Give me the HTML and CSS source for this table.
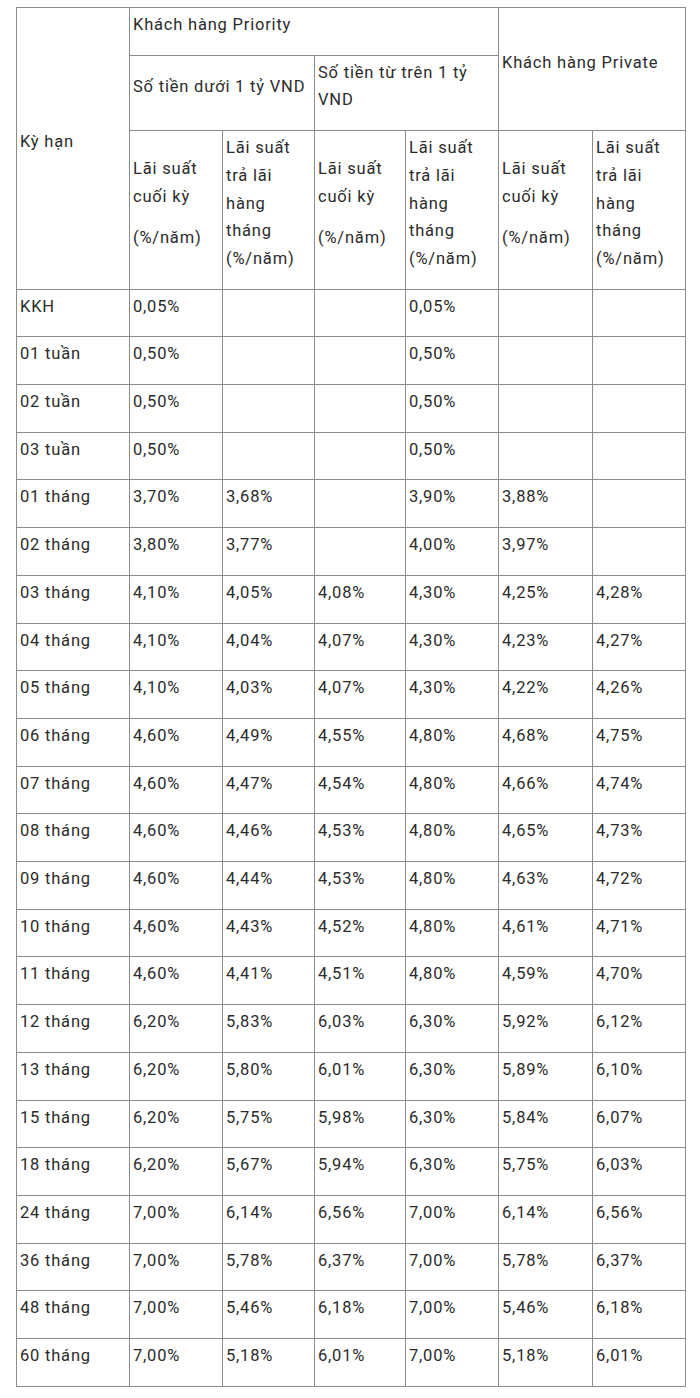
FILE: index.html
```html
<!DOCTYPE html>
<html lang="vi">
<head>
<meta charset="utf-8">
<title>Lãi suất</title>
<link rel="stylesheet" href="styles.css">
</head>
<body>
<div class="page">
<table class="rates">
<colgroup>
<col class="c1"><col class="c2"><col class="c3"><col class="c4"><col class="c5"><col class="c6"><col class="c7">
</colgroup>
<tbody>
<tr>
<td rowspan="3"><p>Kỳ hạn</p></td>
<td colspan="4"><p>Khách hàng Priority</p></td>
<td colspan="2" rowspan="2"><p>Khách hàng Private</p></td>
</tr>
<tr>
<td colspan="2"><p>Số tiền dưới 1 tỷ VND</p></td>
<td colspan="2"><p>Số tiền từ trên 1 tỷ VND</p></td>
</tr>
<tr>
<td><p>Lãi suất cuối kỳ</p><p>(%/năm)</p></td>
<td><p>Lãi suất trả lãi hàng tháng (%/năm)</p></td>
<td><p>Lãi suất cuối kỳ</p><p>(%/năm)</p></td>
<td><p>Lãi suất trả lãi hàng tháng (%/năm)</p></td>
<td><p>Lãi suất cuối kỳ</p><p>(%/năm)</p></td>
<td><p>Lãi suất trả lãi hàng tháng (%/năm)</p></td>
</tr>
<tr><td><p>KKH</p></td><td><p>0,05%</p></td><td></td><td></td><td><p>0,05%</p></td><td></td><td></td></tr>
<tr><td><p>01 tuần</p></td><td><p>0,50%</p></td><td></td><td></td><td><p>0,50%</p></td><td></td><td></td></tr>
<tr><td><p>02 tuần</p></td><td><p>0,50%</p></td><td></td><td></td><td><p>0,50%</p></td><td></td><td></td></tr>
<tr><td><p>03 tuần</p></td><td><p>0,50%</p></td><td></td><td></td><td><p>0,50%</p></td><td></td><td></td></tr>
<tr><td><p>01 tháng</p></td><td><p>3,70%</p></td><td><p>3,68%</p></td><td></td><td><p>3,90%</p></td><td><p>3,88%</p></td><td></td></tr>
<tr><td><p>02 tháng</p></td><td><p>3,80%</p></td><td><p>3,77%</p></td><td></td><td><p>4,00%</p></td><td><p>3,97%</p></td><td></td></tr>
<tr><td><p>03 tháng</p></td><td><p>4,10%</p></td><td><p>4,05%</p></td><td><p>4,08%</p></td><td><p>4,30%</p></td><td><p>4,25%</p></td><td><p>4,28%</p></td></tr>
<tr><td><p>04 tháng</p></td><td><p>4,10%</p></td><td><p>4,04%</p></td><td><p>4,07%</p></td><td><p>4,30%</p></td><td><p>4,23%</p></td><td><p>4,27%</p></td></tr>
<tr><td><p>05 tháng</p></td><td><p>4,10%</p></td><td><p>4,03%</p></td><td><p>4,07%</p></td><td><p>4,30%</p></td><td><p>4,22%</p></td><td><p>4,26%</p></td></tr>
<tr><td><p>06 tháng</p></td><td><p>4,60%</p></td><td><p>4,49%</p></td><td><p>4,55%</p></td><td><p>4,80%</p></td><td><p>4,68%</p></td><td><p>4,75%</p></td></tr>
<tr><td><p>07 tháng</p></td><td><p>4,60%</p></td><td><p>4,47%</p></td><td><p>4,54%</p></td><td><p>4,80%</p></td><td><p>4,66%</p></td><td><p>4,74%</p></td></tr>
<tr><td><p>08 tháng</p></td><td><p>4,60%</p></td><td><p>4,46%</p></td><td><p>4,53%</p></td><td><p>4,80%</p></td><td><p>4,65%</p></td><td><p>4,73%</p></td></tr>
<tr><td><p>09 tháng</p></td><td><p>4,60%</p></td><td><p>4,44%</p></td><td><p>4,53%</p></td><td><p>4,80%</p></td><td><p>4,63%</p></td><td><p>4,72%</p></td></tr>
<tr><td><p>10 tháng</p></td><td><p>4,60%</p></td><td><p>4,43%</p></td><td><p>4,52%</p></td><td><p>4,80%</p></td><td><p>4,61%</p></td><td><p>4,71%</p></td></tr>
<tr><td><p>11 tháng</p></td><td><p>4,60%</p></td><td><p>4,41%</p></td><td><p>4,51%</p></td><td><p>4,80%</p></td><td><p>4,59%</p></td><td><p>4,70%</p></td></tr>
<tr><td><p>12 tháng</p></td><td><p>6,20%</p></td><td><p>5,83%</p></td><td><p>6,03%</p></td><td><p>6,30%</p></td><td><p>5,92%</p></td><td><p>6,12%</p></td></tr>
<tr><td><p>13 tháng</p></td><td><p>6,20%</p></td><td><p>5,80%</p></td><td><p>6,01%</p></td><td><p>6,30%</p></td><td><p>5,89%</p></td><td><p>6,10%</p></td></tr>
<tr><td><p>15 tháng</p></td><td><p>6,20%</p></td><td><p>5,75%</p></td><td><p>5,98%</p></td><td><p>6,30%</p></td><td><p>5,84%</p></td><td><p>6,07%</p></td></tr>
<tr><td><p>18 tháng</p></td><td><p>6,20%</p></td><td><p>5,67%</p></td><td><p>5,94%</p></td><td><p>6,30%</p></td><td><p>5,75%</p></td><td><p>6,03%</p></td></tr>
<tr><td><p>24 tháng</p></td><td><p>7,00%</p></td><td><p>6,14%</p></td><td><p>6,56%</p></td><td><p>7,00%</p></td><td><p>6,14%</p></td><td><p>6,56%</p></td></tr>
<tr><td><p>36 tháng</p></td><td><p>7,00%</p></td><td><p>5,78%</p></td><td><p>6,37%</p></td><td><p>7,00%</p></td><td><p>5,78%</p></td><td><p>6,37%</p></td></tr>
<tr><td><p>48 tháng</p></td><td><p>7,00%</p></td><td><p>5,46%</p></td><td><p>6,18%</p></td><td><p>7,00%</p></td><td><p>5,46%</p></td><td><p>6,18%</p></td></tr>
<tr><td><p>60 tháng</p></td><td><p>7,00%</p></td><td><p>5,18%</p></td><td><p>6,01%</p></td><td><p>7,00%</p></td><td><p>5,18%</p></td><td><p>6,01%</p></td></tr>
</tbody>
</table>
</div>
</body>
</html>
```
FILE: styles.css
```css
html, body {
  margin: 0;
  padding: 0;
  background: #ffffff;
}

.page {
  padding: 7px 16px 0 16px;
}

.rates {
  width: 669px;
  table-layout: fixed;
  border-collapse: collapse;
  font-family: Roboto, "Liberation Sans", sans-serif;
  font-size: 16.5px;
  letter-spacing: 0.8px;
  color: #2b2b2b;
}

.c1 { width: 113px; }
.c2 { width: 93px; }
.c3 { width: 92px; }
.c4 { width: 91px; }
.c5 { width: 93px; }
.c6 { width: 94px; }
.c7 { width: 93px; }

.rates td {
  border: 1px solid #8c8c8c;
  padding: 3px 3px 3px 3px;
  vertical-align: middle;
  text-align: left;
}

.rates p {
  margin: 0 0 13px 0;
  line-height: 27.7px;
}
```
